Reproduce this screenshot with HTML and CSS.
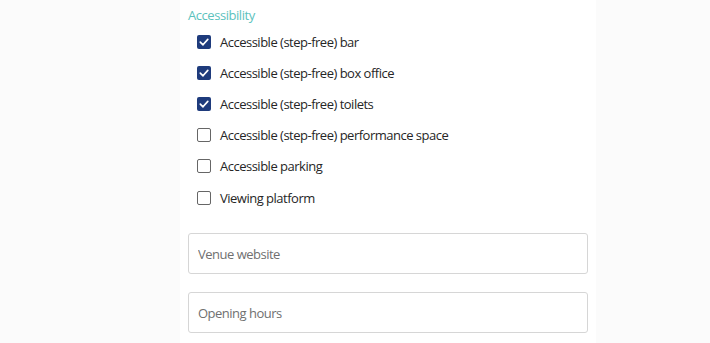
FILE: index.html
```html
<!DOCTYPE html>
<html lang="en">
<head>
    <meta charset="UTF-8">
    <meta name="viewport" content="width=device-width, initial-scale=1.0">
    <title>Venue details</title>
    <link rel="stylesheet" href="styles.css">
</head>
<body>
    <div class="panel">
        <h3 class="section-title">Accessibility</h3>
        <ul class="check-list">
            <li class="check-item">
                <span class="box checked"><svg viewBox="0 0 14 14" width="14" height="14"><path d="M3.3 7.2 L6 9.8 L10.8 4.4" fill="none" stroke="#fff" stroke-width="1.7" stroke-linecap="round" stroke-linejoin="round"/></svg></span>
                <span class="check-label">Accessible (step-free) bar</span>
            </li>
            <li class="check-item">
                <span class="box checked"><svg viewBox="0 0 14 14" width="14" height="14"><path d="M3.3 7.2 L6 9.8 L10.8 4.4" fill="none" stroke="#fff" stroke-width="1.7" stroke-linecap="round" stroke-linejoin="round"/></svg></span>
                <span class="check-label">Accessible (step-free) box office</span>
            </li>
            <li class="check-item">
                <span class="box checked"><svg viewBox="0 0 14 14" width="14" height="14"><path d="M3.3 7.2 L6 9.8 L10.8 4.4" fill="none" stroke="#fff" stroke-width="1.7" stroke-linecap="round" stroke-linejoin="round"/></svg></span>
                <span class="check-label">Accessible (step-free) toilets</span>
            </li>
            <li class="check-item">
                <span class="box"></span>
                <span class="check-label">Accessible (step-free) performance space</span>
            </li>
            <li class="check-item">
                <span class="box"></span>
                <span class="check-label">Accessible parking</span>
            </li>
            <li class="check-item">
                <span class="box"></span>
                <span class="check-label">Viewing platform</span>
            </li>
        </ul>
        <input class="text-field" type="text" placeholder="Venue website">
        <input class="text-field" type="text" placeholder="Opening hours">
    </div>
</body>
</html>
```

FILE: styles.css
```css
body {
    margin: 0;
    background-color: #fbfbfb;
    font-family: "Open Sans", "Liberation Sans", sans-serif;
}
.panel {
    width: 400px;
    min-height: 343px;
    margin-left: 180px;
    padding: 6px 8px 0;
    background-color: #fff;
}
.section-title {
    margin: 0;
    font-size: 13px;
    letter-spacing: -0.45px;
    font-weight: normal;
    line-height: 18px;
    color: #5cc2bd;
}
.check-list {
    list-style: none;
    margin: 2px 0 0;
    padding: 0 0 0 9px;
}
.check-item {
    display: flex;
    align-items: center;
    gap: 9px;
    height: 31.2px;
}
.box {
    width: 14px;
    height: 14px;
    box-sizing: border-box;
    border: 1.5px solid #666;
    border-radius: 2px;
    display: flex;
}
.box.checked {
    border: none;
    background-color: #1e3b7c;
}
.check-label {
    font-size: 13px;
    letter-spacing: -0.5px;
    color: #262626;
}
.text-field {
    display: block;
    box-sizing: border-box;
    width: 400px;
    height: 41px;
    margin-top: 20px;
    padding: 0 9px;
    border: 1px solid #d6d6d6;
    border-radius: 3px;
    font-family: "Open Sans", "Liberation Sans", sans-serif;
    font-size: 13px;
    letter-spacing: -0.5px;
    color: #333;
}
.text-field + .text-field {
    margin-top: 18px;
}
.text-field::placeholder {
    color: #707070;
}
```
